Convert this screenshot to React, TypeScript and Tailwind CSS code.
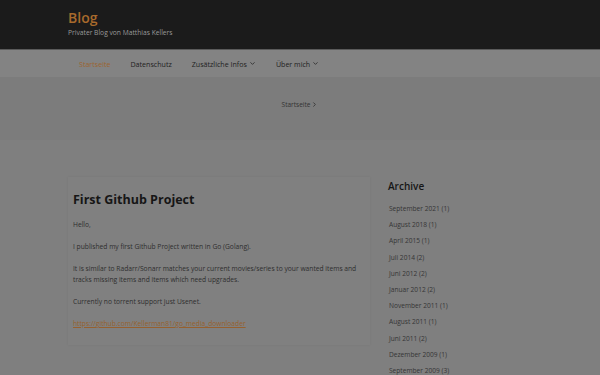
import { ChevronDown, ChevronRight } from 'lucide-react';

const archive = [
  'September 2021 (1)',
  'August 2018 (1)',
  'April 2015 (1)',
  'Juli 2014 (2)',
  'Juni 2012 (2)',
  'Januar 2012 (2)',
  'November 2011 (1)',
  'August 2011 (1)',
  'Juni 2011 (2)',
  'Dezember 2009 (1)',
  'September 2009 (3)',
];

export default function App() {
  return (
    <div className="h-[375px] w-[600px] overflow-hidden bg-[#7f7f7f] font-['Open_Sans',sans-serif]">
      {/* Header */}
      <header className="h-[49px] bg-[#1b1b1b]">
        <div className="mx-auto w-[464px] pt-[9px]">
          <div className="text-[14px] font-semibold leading-[18px] text-[#a86a2c]">Blog</div>
          <div className="mt-[1px] text-[6.7px] leading-[10px] text-[#9a9a9a]">Privater Blog von Matthias Kellers</div>
        </div>
      </header>

      {/* Nav */}
      <nav className="h-[28px] border-t border-[#5a5a5a] bg-[#838383]">
        <ul className="mx-auto flex h-full w-[464px] items-center pl-[11px] pt-[1px] text-[7.1px] font-medium text-[#1e1e1e]">
          <li className="mr-[20px] text-[#9c6430]">Startseite</li>
          <li className="mr-[20px]">Datenschutz</li>
          <li className="mr-[20px] flex items-center gap-[2px]">
            Zusätzliche Infos <ChevronDown size={7} strokeWidth={2.5} />
          </li>
          <li className="flex items-center gap-[2px]">
            Über mich <ChevronDown size={7} strokeWidth={2.5} />
          </li>
        </ul>
      </nav>

      {/* Breadcrumb */}
      <div className="flex h-[63px] items-center justify-center bg-[#7c7c7c] pb-[8px]">
        <span className="flex items-center gap-[1px] text-[6.5px] text-[#333333]">
          Startseite <ChevronRight size={7} strokeWidth={3} />
        </span>
      </div>

      {/* Content */}
      <div className="mx-auto flex w-[464px] gap-[18px] pt-[37px]">
        <article className="h-[168px] w-[302px] bg-[#808080] px-[5px] pt-[14px] shadow-[0_0_2px_rgba(0,0,0,0.08)]">
          <h1 className="text-[12.5px] font-bold leading-[18px] text-[#161616]">First Github Project</h1>
          <div className="mt-[10px] space-y-[11px] text-[6.7px] leading-[11px] text-[#2e2e2e]">
            <p>Hello,</p>
            <p>I published my first Github Project written in Go (Golang).</p>
            <p>
              It is similar to Radarr/Sonarr matches your current movies/series to your wanted items and tracks missing
              items and items which need upgrades.
            </p>
            <p>Currently no torrent support just Usenet.</p>
            <p>
              <span className="text-[#96602e] underline">https://github.com/Kellerman81/go_media_downloader</span>
            </p>
          </div>
        </article>

        <aside className="w-[144px] pt-[2px]">
          <h2 className="text-[10px] font-semibold leading-[14px] text-[#161616]">Archive</h2>
          <ul className="mt-[11px] pl-[1px] text-[6.6px] text-[#353535]">
            {archive.map((a) => (
              <li key={a} className="h-[16.2px] leading-[9px]">
                {a}
              </li>
            ))}
          </ul>
        </aside>
      </div>
    </div>
  );
}
